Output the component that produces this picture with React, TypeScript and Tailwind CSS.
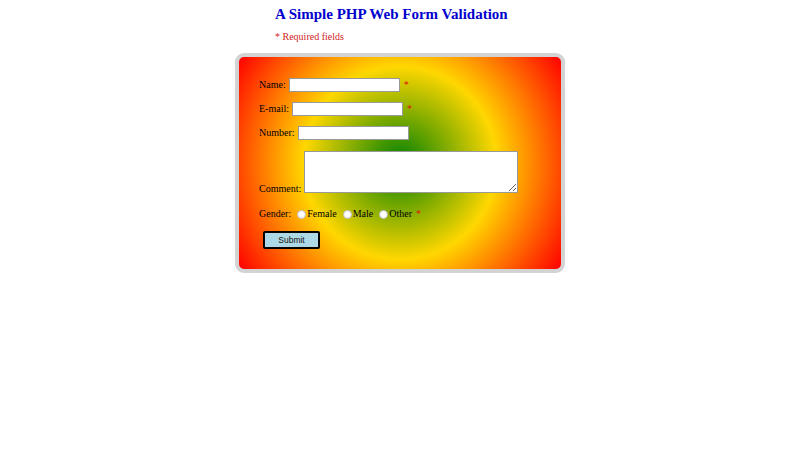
export default function App() {
  return (
    <div className="min-h-[450px] bg-white font-['Liberation_Serif',serif] text-black">
      <div className="mx-auto w-[330px]">
        <h2 className="mt-[5px] pl-[40px] text-[15px] leading-[18px] font-bold text-[#0000cd]">
          A Simple PHP Web Form Validation
        </h2>
        <p className="mt-[8px] pl-[40px] text-[10px] leading-[12px] text-[#d01c1c]">* Required fields</p>

        <form
          className="mt-[10px] flex flex-col rounded-[9px] border-4 border-[#d3d3d3] bg-[radial-gradient(circle,#008000,#ffd700,#ff0000)] pt-[21px] pb-[20px] pl-[20px] text-[10px] leading-[12px]"
          onSubmit={(e) => e.preventDefault()}
        >
          <div className="flex h-[14px] items-center">
            <label>Name:</label>
            <input type="text" className="ml-[3px] h-[14px] w-[111px] border border-[#999] bg-white" />
            <span className="ml-[4px] text-[#e01010]">*</span>
          </div>

          <div className="mt-[10px] flex h-[14px] items-center">
            <label>E-mail:</label>
            <input type="text" className="ml-[3px] h-[14px] w-[111px] border border-[#999] bg-white" />
            <span className="ml-[4px] text-[#e01010]">*</span>
          </div>

          <div className="mt-[10px] flex h-[14px] items-center">
            <label>Number:</label>
            <input type="text" className="ml-[3px] h-[14px] w-[111px] border border-[#999] bg-white" />
          </div>

          <div className="mt-[11px] flex items-end">
            <label className="mb-[-2px]">Comment:</label>
            <textarea className="ml-[3px] h-[42px] w-[214px] resize border border-[#999] bg-white" />
          </div>

          <div className="mt-[14px] flex h-[14px] items-center">
            <label>Gender:</label>
            <input type="radio" name="gender" className="ml-[6px] h-[9px] w-[9px] appearance-none rounded-full border border-[#bbb] bg-white" />
            <span className="ml-[1px]">Female</span>
            <input type="radio" name="gender" className="ml-[6px] h-[9px] w-[9px] appearance-none rounded-full border border-[#bbb] bg-white" />
            <span className="ml-[1px]">Male</span>
            <input type="radio" name="gender" className="ml-[6px] h-[9px] w-[9px] appearance-none rounded-full border border-[#bbb] bg-white" />
            <span className="ml-[1px]">Other</span>
            <span className="ml-[4px] text-[#e01010]">*</span>
          </div>

          <div className="mt-[10px] flex">
            <button
              type="submit"
              className="ml-[4px] h-[18px] w-[57px] rounded-[2px] border-2 border-black bg-[#add8e6] font-['Liberation_Sans',sans-serif] text-[8.5px] leading-[14px] text-[#111]"
            >
              Submit
            </button>
          </div>
        </form>
      </div>
    </div>
  );
}
